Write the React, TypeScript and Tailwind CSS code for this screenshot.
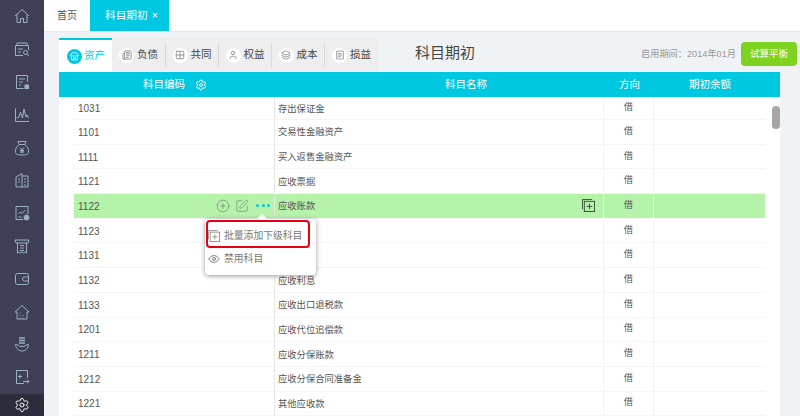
import type { ReactNode } from 'react'
import { CirclePlus, Eye, Grid2x2, Layers, Newspaper, ReceiptText, Settings, SquarePen, Store, User } from 'lucide-react'

const fontStack = "font-['Liberation_Sans','Noto_Sans_CJK_SC',sans-serif]"

// sidebar glyphs, all on the same 16 box
const sideIcons: ReactNode[] = [
  <path d="M1 8 8 1.5 15 8M3 6.5V14.5h3.5v-4h3v4H13V6.5" />,
  <>
    <path d="M3 4.5V2h10v2.5M9 14.5H1.5V4.5h13V9M4 8h5M4 11h3" />
    <circle cx="11.5" cy="11.5" r="2" />
    <path d="m13 13 2 2" />
  </>,
  <>
    <path d="M13.5 8V1.5h-11v13h7M5 5h6M5 8h4M5 11h2" />
    <rect x="11" y="11" width="3.5" height="3.5" fill="currentColor" />
  </>,
  <path d="M1.5 1.5v13H15M2.5 11 5 10l1.5-5 2 6 1.5-9 2 8 1-2 1.5 3" />,
  <path d="M5 4.5 4 1.5h8l-1 3M5 4.5h6C14 7 15 10 14.5 12.5 14 14.5 12 15 8 15s-6-.5-6.500-2.500C1 10 2 7 5 4.500ZM6 7.500l2 2.500 2-2.500M8 10v3M6 10.500h4M6 12h4" />,
  <path d="M2 5 8 1.500V15H2ZM8 4h6v11H8M4 7h2M4 10h2M10 7h2M10 10h2M10 13h2" />,
  <>
    <path d="M9 14.500H2v-13h12V9M4.500 9l2-2 1.500 1.500 3-3.500M4.500 12h3" />
    <circle cx="12.500" cy="12.500" r="2.500" fill="currentColor" />
  </>,
  <path d="M1 2h14l-1 3H2ZM3.500 5v10L5 14l1.500 1L8 14l1.500 1 1.500-1 1.500 1V5M6 7.500h4M6 10h4M6 12.500h4" />,
  <>
    <rect x="1.500" y="2.500" width="13" height="11" rx="2" />
    <path d="M14.500 6H10.500a2 2 0 0 0 0 4h4" />
  </>,
  <path d="M8 1.500 1 8h2v7h10V8h2ZM5.500 9h1M5.500 11.500h1M5.500 14h1M8.500 11.500h1M8.500 14h1" />,
  <>
    <path d="M1.500 8.500C2 13 5 15 8 15s6-2 6.500-6.500c-2 0-3 1-4.500 2H6C5 9.500 3.500 8.500 1.500 8.500Z" />
    <path d="M5 2h6M5 4.500h6M5 7h6" strokeWidth="1.600" />
  </>,
  <path d="M10 14.500H2.500v-13h11V9M6 5.500v4M4 7.500h4M9 12.500h6M13 10.500l2 2-2 2" />,
]

const tabs = [
  { label: '负债', icon: Newspaper, w: 'w-[54px]' },
  { label: '共同', icon: Grid2x2, w: 'w-[53px]' },
  { label: '权益', icon: User, w: 'w-[53px]' },
  { label: '成本', icon: Layers, w: 'w-[53px]' },
  { label: '损益', icon: ReceiptText, w: 'w-[53px]' },
]

const rows = [
  ['1031', '存出保证金'],
  ['1101', '交易性金融资产'],
  ['1111', '买入返售金融资产'],
  ['1121', '应收票据'],
  ['1122', '应收账款'],
  ['1123', ''],
  ['1131', ''],
  ['1132', '应收利息'],
  ['1133', '应收出口退税款'],
  ['1201', '应收代位追偿款'],
  ['1211', '应收分保账款'],
  ['1212', '应收分保合同准备金'],
  ['1221', '其他应收款'],
]

function CopyPlus({ className }: { className?: string }) {
  return (
    <svg viewBox="0 0 14 14" className={className} fill="none" stroke="currentColor" strokeWidth="1">
      <path d="M0.5 11V0.5H11" />
      <rect x="2.500" y="2.500" width="11" height="11" />
      <path d="M8 5v6M5 8h6" />
    </svg>
  )
}

function Row({ code, name }: { code: string; name: string }) {
  const active = code === '1122'
  return (
    <div
      className={`flex h-[24.7px] border-b border-[#f5f5f5] text-[#555] first:h-[23px] ${active ? 'bg-[#b5f2aa]' : 'bg-white'}`}
    >
      <div className="flex w-[201px] items-center justify-between border-r border-[#e6e6e6] pl-1 pr-1">
        <span className="pt-[1px] text-[10px]">{code}</span>
        {active && (
          <div className="flex items-center gap-[5px] text-[#607560]">
            <CirclePlus size={14} strokeWidth={1} />
            <SquarePen size={14} strokeWidth={1} />
            <span className="ml-0.5 flex gap-[2.5px]">
              <i className="h-[3px] w-[3px] rounded-full bg-[#00c8e0]" />
              <i className="h-[3px] w-[3px] rounded-full bg-[#00c8e0]" />
              <i className="h-[3px] w-[3px] rounded-full bg-[#00c8e0]" />
            </span>
          </div>
        )}
      </div>
      <div className="flex w-[329px] items-center justify-between border-r border-[#f3f3f3] pl-[3px] pr-2 text-[9.3px]">
        <span className="pt-[3px]">{name}</span>
        {active && <CopyPlus className="h-[13px] w-[13px] text-[#33493a]" />}
      </div>
      <div className="flex w-[50px] items-center justify-center border-r border-[#f3f3f3] text-[9.3px]">借</div>
      <div className="flex-1" />
    </div>
  )
}

export default function App() {
  return (
    <div className={`flex h-[416px] w-[800px] overflow-hidden bg-[#f0f3f6] ${fontStack}`}>
      <aside className="flex w-[44px] shrink-0 flex-col bg-[#3f3f56]">
        {sideIcons.map((icon, i) => (
          <div key={i} className="flex h-[32.8px] shrink-0 items-center justify-center text-[#9db3c4]">
            <svg viewBox="0 0 16 16" className="h-[16px] w-[16px]" fill="none" stroke="currentColor" strokeWidth="1">
              {icon}
            </svg>
          </div>
        ))}
        <div className="flex flex-1 items-center justify-center bg-[#2c2c3c] text-white">
          <Settings size={16} strokeWidth={1.4} />
        </div>
      </aside>

      <main className="flex min-w-0 flex-1 flex-col">
        <div className="flex h-[32px] shrink-0 border-b border-[#e6e6e6] bg-white">
          <div className="flex w-[46px] items-center justify-center text-[10px] text-[#555]">首页</div>
          <div className="flex w-[79px] items-center justify-center gap-1 bg-[#00c8e0] pl-1 text-[10.7px] text-white">
            <span>科目期初</span>
            <span>×</span>
          </div>
        </div>

        <div className="pl-[15px] pt-[6px]">
          <div className="mr-[3px] flex h-[34px] items-stretch">
            <div className="flex w-[53px] items-center gap-[2px] border-t-2 border-[#00c8e0] bg-white pl-2 text-[10.5px] text-[#00c8e0]">
              <span className="flex h-[15px] w-[15px] items-center justify-center rounded-full bg-[#00c8e0] text-white">
                <Store size={9} />
              </span>
              资产
            </div>
            <div className="flex bg-[#eeeeee]">
              {tabs.map(t => (
                <div
                  key={t.label}
                  className={`my-[5px] flex ${t.w} items-center justify-center gap-[3px] border-r border-[#d9d9d9] text-[10.5px] text-[#444] last:border-r-0`}
                >
                  <span className="flex h-[15px] w-[15px] items-center justify-center rounded-full bg-white text-[#888]">
                    <t.icon size={10} />
                  </span>
                  {t.label}
                </div>
              ))}
            </div>
            <div className="ml-[37px] flex items-center pb-[3px] text-[15px] text-[#444]">科目期初</div>
            <div className="ml-auto mt-1 flex items-start gap-[5px] text-[9.2px] text-[#999999]">
              <span className="leading-[24px]">启用期间：2014年01月</span>
              <button className="h-[24px] w-[56px] rounded-sm bg-[#7ed321] text-[9.5px] text-white">试算平衡</button>
            </div>
          </div>

          <div className="mr-[20px] flex h-[25px] items-center bg-[#00c8e0] text-[10.5px] text-white">
            <div className="flex w-[216px] items-center gap-[10px] pl-[84px]">
              <span>科目编码</span>
              <Settings size={12} />
            </div>
            <div className="w-[329px] pl-[170px]">科目名称</div>
            <div className="w-[50px] pl-[15px]">方向</div>
            <div className="pl-[35px]">期初余额</div>
          </div>

          <div className="relative mr-[20px] bg-white px-[15px]">
            {rows.map(([code, name]) => (
              <Row key={code} code={code} name={name} />
            ))}
            <div className="absolute right-0 top-[9px] h-[23px] w-[8px] rounded bg-[#a9a5a5]" />

            <div className="absolute left-[146px] top-[122px] h-[56px] w-[111px] rounded-sm bg-white text-[9.8px] text-[#777] shadow-[0_1px_5px_rgba(0,0,0,0.4)]">
              <div className="absolute -top-[5px] left-[52px] h-0 w-0 border-x-[5px] border-b-[5px] border-x-transparent border-b-white" />
              <div className="flex h-[28px] items-center gap-[4px] pl-[3px] pt-[6px]">
                <CopyPlus className="h-[12px] w-[12px] text-[#888]" />
                批量添加下级科目
              </div>
              <div className="flex h-[24px] items-center gap-[4px] pl-[3px]">
                <Eye size={12} strokeWidth={1.6} className="text-[#666]" />
                禁用科目
              </div>
            </div>
            <div className="absolute left-[147px] top-[123px] h-[28px] w-[104px] rounded-sm border-2 border-[#e60012]" />
          </div>
        </div>
      </main>
    </div>
  )
}
